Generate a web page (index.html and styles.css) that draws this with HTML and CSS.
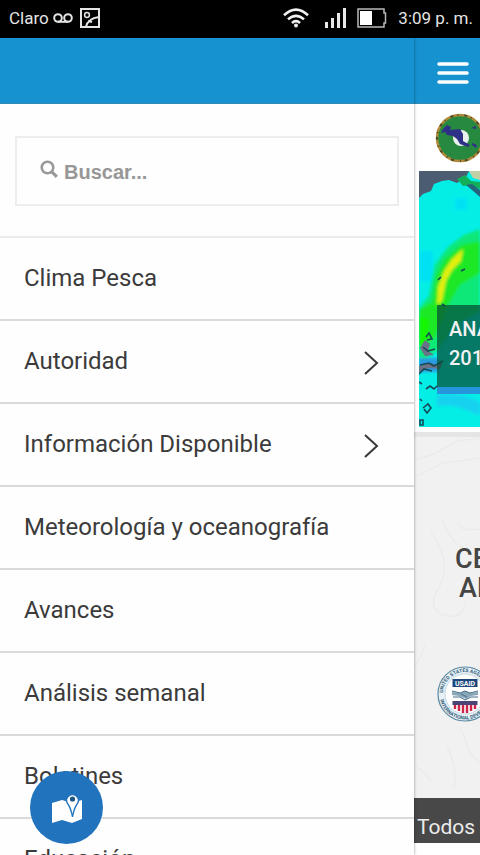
FILE: index.html
```html
<!DOCTYPE html>
<html lang="es">
<head>
<meta charset="utf-8">
<meta name="viewport" content="width=device-width, initial-scale=1">
<title>Clima Pesca</title>
<link rel="stylesheet" href="styles.css">
</head>
<body>
<header class="status">
  <span>Claro</span>
  <svg class="voicemail" viewBox="0 0 20 10" width="20" height="10" fill="none" stroke="#e4e4e4" stroke-width="2"><circle cx="5" cy="5" r="3.8"/><circle cx="15" cy="5" r="3.8"/><path d="M5 8.8h10"/></svg>
  <svg class="photo" viewBox="0 0 20 20" width="20" height="20" fill="none" stroke="#e4e4e4" stroke-width="2"><path d="M1 1h18v18H1z"/><circle cx="7" cy="7" r="2.4" stroke-width="1.5"/><path d="M6 19c1-5 5-9 13-10M8 13l4 1"/></svg>
  <svg class="wifi" viewBox="0 0 26 20" width="26" height="20" fill="none" stroke="#f2f2f2" stroke-width="2.6"><path d="M1 7.200Q13-4 25 7.200M5 11.400q8-7.200 16 0M9 15q4-3.600 8 0"/><circle cx="13" cy="17.500" r="2" fill="#f2f2f2" stroke="none"/></svg>
  <svg class="signal" viewBox="0 0 22 20" width="22" height="20" fill="#e8e8e8"><path d="M0 14h3v6H0zM6 10h3v10H6zM12 5h3v15h-3zM18 0h3v20h-3z"/></svg>
  <svg class="battery" viewBox="0 0 30 20" width="30" height="20"><path d="M1 1h26v4h1.500v10H27v4H1z" fill="none" stroke="#b9b9b9" stroke-width="1.500"/><path d="M3 3h12v14H3z" fill="#fff"/></svg>
  <time>3:09 p. m.</time>
</header>
<div class="app">
  <aside class="drawer">
    <div class="bar"></div>
    <form class="search">
      <label class="field">
        <svg viewBox="0 0 18 18" width="18" height="18" fill="none" stroke="#999" stroke-width="2.600"><circle cx="7.500" cy="7.500" r="5.800"/><path d="M11.800 11.800l5 5" stroke-width="3.200"/></svg>
        <input type="search" placeholder="Buscar..." aria-label="Buscar">
      </label>
    </form>
    <nav class="menu">
      <a href="#">Clima Pesca</a>
      <a href="#">Autoridad<svg viewBox="0 0 16 26" width="16" height="26"><path d="M2 2l12 11L2 24"/></svg></a>
      <a href="#">Información Disponible<svg viewBox="0 0 16 26" width="16" height="26"><path d="M2 2l12 11L2 24"/></svg></a>
      <a href="#">Meteorología y oceanografía</a>
      <a href="#">Avances</a>
      <a href="#">Análisis semanal</a>
      <a href="#">Boletines</a>
      <a href="#">Educación</a>
    </nav>
  </aside>
  <main class="page">
    <div class="bar">
      <button class="toggle" aria-label="Menú"><svg viewBox="0 0 32 24" width="32" height="24" stroke="#fff" stroke-width="3.500" stroke-linecap="round"><path d="M2 3h28M2 12h28M2 21h28"/></svg></button>
    </div>
    <div class="brand">
      <svg viewBox="0 0 50 50" width="50" height="50">
        <circle cx="25" cy="25" r="23" fill="#27893f" stroke="#b08a3a" stroke-width="2.500"/>
        <circle cx="25" cy="25" r="23" fill="none" stroke="#4a4c28" stroke-width="2" stroke-dasharray="3 4 1 6"/>
        <circle cx="26" cy="25" r="8" fill="#e9f1ee"/>
        <path d="M8 16l4-4 4 2-1 3 10-1 3 5v7l7 4-2 2-8-3-3-5-4-3-6-1-2-3-4 1zM36 15l5-2v3zM37 30l5 2-1 3-4-3z" fill="#2f3186"/>
      </svg>
    </div>
    <section class="slide">
      <svg class="map" viewBox="0 0 61 256" preserveAspectRatio="xMinYMin slice" aria-hidden="true">
        <defs><filter id="soft"><feGaussianBlur stdDeviation="1.500"/></filter></defs>
        <path d="M0 0h61v256H0z" fill="#05eee6"/>
        <path d="M0 80h14v30H0zM36 27h12v12H36z" fill="#00e2f4" filter="url(#soft)"/>
        <g filter="url(#soft)">
          <path d="M61 58L45 64 29 76 16 94 10 125 0 137v55l18-12 20-28 23-11z" fill="#08e879"/>
          <path d="M61 70L42 74 26 88 17 105 13 131 0 139v38l16-10 12-31 13-22 20-12z" fill="#1fe827"/>
          <path d="M44 78l-2 12-9 9-6 11-4 20-5 4 1-18 6-16 8-12z" fill="#e4ef0b"/>
          <path d="M0 145l10 3-1 20-9 10z" fill="#14f500"/>
          <path d="M0 187h20v14H0z" fill="#2b9be0"/>
          <path d="M18 224q22-4 43 7v14q-30-15-43-9z" fill="#17d2ef"/>
        </g>
        <path d="M0 0h50l-3 6-9 6-8-3-7 1-8 3-3 7-8 3-4 4z" fill="#4c5d72"/>
        <path d="M38 8l8-4 6 6 9 1v7l-9-4-8 1z" fill="#13ae59"/>
        <path d="M50 0h11v9l-7-2z" fill="#c3cfa4"/>
        <path d="M47 14l6-1 8 6v7l-8-7z" fill="#23657d"/>
        <path d="M1 177l5-8 5 4-2 7 6 4-9 1zM0 195l11-3 8 2 5-5-3 9-12-1-9 4z" fill="#697286"/>
        <path d="M7 166l3-4 3 6-5 1M4 176l5 4 7-2M1 194l9-2 5 3 9-5M0 203l5-5 8 2M0 211l3 2M7 218l4-3 4 3 3-3M1 228l2 2M4 237l5-4 3 4-4 5-3-4M1 249h3v5H1zM19 109l3-3M42 100l4-2M23 133l3 2" fill="none" stroke="#164a57" stroke-width="1.600"/>
      </svg>
      <p class="caption">ANA<br>201</p>
    </section>
    <section class="partners">
      <svg class="relief" viewBox="0 0 66 365" preserveAspectRatio="xMinYMin slice" fill="none" stroke="#ebebeb" stroke-width="1.500" aria-hidden="true"><path d="M0 23l20-6 24-13 22-3M0 40l29-14 37-5M28 82q9 24 22 29M17 96q22 28 8 55-13 20 4 27 20 6 23-14M44 85q3 11 22 7M0 230q8-10 11-23M2 330q12 7 15 15M33 308q11 24 7 44M46 290l11 27 9 8"/></svg>
      <h2><span>CE</span><span class="second">AL</span></h2>
      <svg class="seal" viewBox="0 0 56 56" width="56" height="56">
        <defs><path id="ring-top" d="M6 28a22 22 0 0 1 44 0"/><path id="ring-bottom" d="M2.500 28a25.500 25.500 0 0 0 51 0"/></defs>
        <circle cx="28" cy="28" r="27" fill="#e8f1f5" stroke="#5c8aa3" stroke-width="1.200"/>
        <circle cx="28" cy="28" r="20" fill="#fff" stroke="#c4d8e1"/>
        <g class="ring"><text><textPath href="#ring-top" startOffset="1">UNITED STATES AGENCY</textPath></text><text><textPath href="#ring-bottom" startOffset="6">INTERNATIONAL DEVELOPM</textPath></text></g>
        <path d="M15.500 13h25v8h-25z" fill="#1d467b"/>
        <text class="usaid" x="28" y="19.500" text-anchor="middle">USAID</text>
        <path d="M15 26l9 1 4-2 5 2 8-1v3l-7 1-5 3-7-3-7-1z" fill="#8aa7b8"/>
        <path d="M15 25l8 2 5-2 5 2 8-2M16 31l7 0 5 3 6-3h7M24 28l6 3" fill="none" stroke="#456f89"/>
        <path d="M15.500 35h25v4h-25z" fill="#4a4576"/>
        <path d="M16 39h24q-1 7-12 8-11-1-12-8z" fill="#fff"/>
        <path d="M18 39v4M22 39v6M26 39v8M30 39v8M34 39v6M38 39v4" stroke="#cf2449" stroke-width="2.400"/>
      </svg>
    </section>
    <div class="tabs">Todos</div>
  </main>
</div>
<button class="fab" aria-label="Mapa">
  <svg viewBox="0 0 32 32" width="32" height="32"><path d="M1 11l10-3 10 3 10-3v19l-10 4-10-3-10 3z" fill="#fff"/><path d="M21.500 25q-1.500-9-5-13.500a5.800 5.800 0 1 1 10 0q-3.500 4.500-5 13.500z" fill="#fff" stroke="#2273bd" stroke-width="1.300"/><circle cx="21.500" cy="7" r="2.600" fill="#1c5582"/></svg>
</button>
</body>
</html>
```
FILE: styles.css
```css
* { box-sizing: border-box; }

body {
  margin: 0;
  height: 100vh;
  display: flex;
  flex-direction: column;
  overflow: hidden;
  background: #fff;
  color: #3b3b3b;
  font-family: Roboto, "Liberation Sans", sans-serif;
}

svg { display: block; flex: none; }
button { border: 0; padding: 0; cursor: pointer; }

.status {
  flex: none;
  display: flex;
  align-items: center;
  height: 38px;
  padding: 0 7px 2px 9px;
  background: #000;
  color: #e4e4e4;
  font-size: 17px;
}
.voicemail { margin: 0 7px 0 4px; }
.wifi { margin-left: auto; }
.signal { margin: 0 10px 0 16px; }
.battery { margin-right: 11px; }

.app { flex: 1; min-height: 0; display: flex; overflow: hidden; }

.bar {
  display: flex;
  align-items: center;
  height: 66px;
  border-bottom: 1px solid #3589b4;
  background: #1592cf;
}

.drawer {
  flex: none;
  width: 86.25%;
  box-shadow: 0 0 3px #0006;
  background: #fefefe;
  z-index: 1;
}
.search { padding: 32px 15px 30px; }
.field {
  display: flex;
  align-items: center;
  gap: 6px;
  height: 70px;
  padding: 0 23px;
  border: 2px solid #ededed;
}
.field svg { margin-bottom: 4px; }
.field input {
  flex: 1;
  min-width: 0;
  padding: 2px 0 0;
  border: 0;
  outline: 0;
  background: none;
  font: bold 20px "Liberation Sans", sans-serif;
}
.field input::placeholder { color: #979797; opacity: 1; }

.menu a {
  display: flex;
  align-items: center;
  justify-content: space-between;
  height: 83px;
  padding: 0 35px 2px 24px;
  border-top: 2px solid #dadada;
  color: inherit;
  font-size: 24px;
  text-decoration: none;
}
.menu a:first-child { border-color: #ebebeb; }
.menu svg {
  margin-top: 4px;
  fill: none;
  stroke: #383838;
  stroke-width: 2;
}

.page {
  flex: 1;
  min-width: 0;
  overflow: hidden;
  display: flex;
  flex-direction: column;
}
.page > * { flex: none; }
.toggle { margin: 4px 0 0 23px; background: none; }
.brand { padding: 9px 0 8px 21px; }
.slide {
  position: relative;
  padding: 0 0 5px 5px;
}
.map { width: 100%; height: 256px; }
.caption {
  position: absolute;
  top: 134px;
  left: 23px;
  right: 0;
  height: 89px;
  margin: 0;
  padding: 10px 0 0 12px;
  overflow: hidden;
  border-bottom: 7px solid #2695dc;
  background: #064b34b8;
  color: #f2f2f2;
  font-size: 20px;
  font-weight: 500;
  line-height: 29px;
}
.partners {
  position: relative;
  height: 366px;
  padding: 108px 0 0 23px;
  border-top: 5px solid #e5e5e5;
  background: #f1f1f1;
}
.relief { position: absolute; inset: 0; width: 100%; height: 100%; }
.partners h2 {
  position: relative;
  margin: 0 0 63px 18px;
  color: #454545;
  font-size: 27px;
  font-weight: 500;
  line-height: 29px;
}
.partners h2 span { display: block; }
.partners h2 .second { padding-left: 4px; }
.seal { position: relative; }
.ring { fill: #315f7d; font-size: 5px; font-weight: 700; }
.usaid { fill: #fff; font-size: 7px; font-weight: 700; }
.tabs {
  height: 45px;
  padding: 0 3px;
  background: #484848;
  color: #ececec;
  font-size: 21px;
  line-height: 58px;
}

.fab {
  position: fixed;
  left: 30px;
  bottom: 11px;
  display: grid;
  place-items: center;
  width: 73px;
  height: 73px;
  border-radius: 50%;
  background: #2273bd;
  z-index: 2;
}
```
